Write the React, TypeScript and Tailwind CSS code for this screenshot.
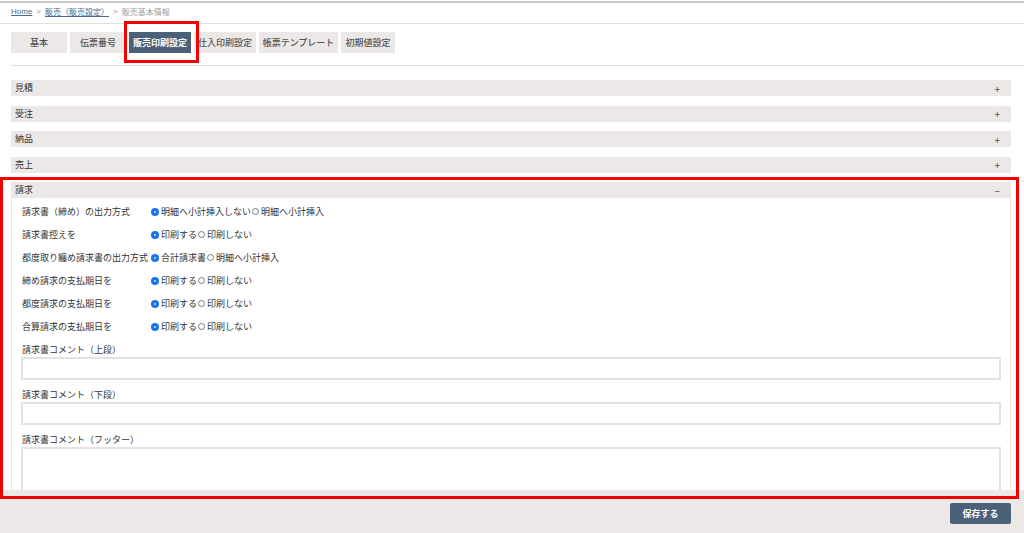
import { ReactNode } from "react";

/**
 * 販売基本情報 - 販売印刷設定タブ
 */

type Option = { label: string; checked?: boolean };

const tabs = [
  { label: "基本", w: "w-[56px]" },
  { label: "伝票番号", w: "w-[56px]" },
  { label: "販売印刷設定", w: "w-[62px]", active: true },
  { label: "仕入印刷設定", w: "w-[62px]" },
  { label: "帳票テンプレート", w: "w-[79px]" },
  { label: "初期値設定", w: "w-[54px]" },
];

const sections = ["見積", "受注", "納品", "売上"];

const radioRows: { label: string; options: Option[] }[] = [
  { label: "請求書（締め）の出力方式", options: [{ label: "明細へ小計挿入しない", checked: true }, { label: "明細へ小計挿入" }] },
  { label: "請求書控えを", options: [{ label: "印刷する", checked: true }, { label: "印刷しない" }] },
  { label: "都度取り纏め請求書の出力方式", options: [{ label: "合計請求書", checked: true }, { label: "明細へ小計挿入" }] },
  { label: "締め請求の支払期日を", options: [{ label: "印刷する", checked: true }, { label: "印刷しない" }] },
  { label: "都度請求の支払期日を", options: [{ label: "印刷する", checked: true }, { label: "印刷しない" }] },
  { label: "合算請求の支払期日を", options: [{ label: "印刷する", checked: true }, { label: "印刷しない" }] },
];

const Radio = ({ checked }: { checked?: boolean }) =>
  checked ? (
    <span className="ml-px mr-[2px] w-[8px] h-[8px] shrink-0 rounded-full bg-[#1a73e8] flex items-center justify-center">
      <span className="w-[2px] h-[2px] rounded-full bg-[#cfe0fb]" />
    </span>
  ) : (
    <span className="ml-px mr-[2px] w-[7px] h-[7px] shrink-0 rounded-full border border-[#7a7a7a] bg-white" />
  );

const SectionHeader = ({ title, open }: { title: string; open?: boolean }) => (
  <div className="h-[16px] bg-[#ece8e7] flex items-center justify-between pl-[4px] pr-[11px] text-[9px] text-[#333]">
    <span>{title}</span>
    <span className="text-[10px] text-[#555]">{open ? "−" : "+"}</span>
  </div>
);

const CommentField = ({ label, children }: { label: string; children: ReactNode }) => (
  <div className="flex flex-col">
    <div className="h-[15px] leading-[15px] pl-px text-[9px] text-[#333]">{label}</div>
    {children}
  </div>
);

export default function App() {
  return (
    <div className="relative w-[1024px] h-[533px] overflow-hidden bg-white flex flex-col font-['Noto_Sans_CJK_JP','Noto_Sans',sans-serif]">
      {/* Scroll area */}
      <div className="h-[490px] overflow-hidden">
        <div className="h-px" />
        <div className="h-[2px] bg-[#c9c9c9]" />

        {/* Breadcrumb */}
        <div className="h-[21px] pb-[3px] pl-[11px] flex items-center gap-[4px] text-[8px] border-b border-[#dedede] font-['Liberation_Sans','Noto_Sans_CJK_JP',sans-serif]">
          <span className="text-[#4a6a90] underline">Home</span>
          <span className="text-[#999]">&gt;</span>
          <span className="text-[#4a6a90] underline font-['Noto_Sans_CJK_JP',sans-serif]">販売（販売設定）</span>
          <span className="text-[#999]">&gt;</span>
          <span className="text-[#a0a0a0] font-['Noto_Sans_CJK_JP',sans-serif]">販売基本情報</span>
        </div>

        {/* Tabs */}
        <div className="ml-[11px] pt-[8px] pb-[12px] border-b border-[#dedede] flex gap-[3px]">
          {tabs.map((t) => (
            <div
              key={t.label}
              className={`${t.w} h-[21px] flex items-center justify-center text-[9px] ${
                t.active ? "bg-[#4b6079] text-white font-bold" : "bg-[#ece8e7] text-[#555] font-medium"
              }`}
            >
              {t.label}
            </div>
          ))}
        </div>

        {/* Accordions */}
        <div className="ml-[11px] w-[1000px] mt-[14px] flex flex-col gap-[9.5px]">
          {sections.map((s) => (
            <SectionHeader key={s} title={s} />
          ))}
          <div>
            <SectionHeader title="請求" open />
            <div className="bg-white border-x border-[#e6e6e6] px-[9px] pt-[2px] pb-[10px]">
              {radioRows.map((r) => (
                <div key={r.label} className="h-[23px] flex items-center pl-px text-[9px] text-[#333]">
                  <span className="w-[128px] shrink-0">{r.label}</span>
                  {r.options.map((o) => (
                    <span key={o.label} className="flex items-center">
                      <Radio checked={o.checked} />
                      <span>{o.label}</span>
                    </span>
                  ))}
                </div>
              ))}

              <div className="mt-[4px] flex flex-col gap-[7px]">
                <CommentField label="請求書コメント（上段）">
                  <div className="h-[23px] border-2 border-[#e2e2e2] bg-white" />
                </CommentField>
                <CommentField label="請求書コメント（下段）">
                  <div className="h-[23px] border-2 border-[#e2e2e2] bg-white" />
                </CommentField>
                <CommentField label="請求書コメント（フッター）">
                  <div className="h-[60px] border-2 border-[#e2e2e2] bg-white" />
                </CommentField>
              </div>
            </div>
          </div>
        </div>
      </div>

      {/* Footer */}
      <div className="h-[43px] bg-[#ece8e7] flex justify-end items-start pt-[13px] pr-[13px]">
        <button className="w-[61px] h-[21px] rounded-[2px] bg-[#4b6079] text-white text-[9px] font-bold flex items-center justify-center">
          保存する
        </button>
      </div>

      {/* Annotations */}
      <div className="absolute left-[124px] top-[21px] w-[75px] h-[42px] border-[3px] border-[#f20000] pointer-events-none" />
      <div className="absolute left-0 top-[177px] w-[1019px] h-[322px] border-[3px] border-[#f20000] pointer-events-none" />
    </div>
  );
}
